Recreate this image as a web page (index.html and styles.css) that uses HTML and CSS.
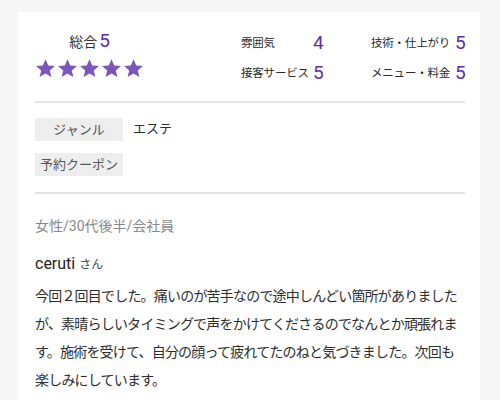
FILE: index.html
```html
<!DOCTYPE html>
<html lang="ja">
<head>
<meta charset="utf-8">
<link rel="stylesheet" href="styles.css">
</head>
<body>
<div class="card">
  <section class="ratings">
    <div class="overall">
      <div class="overall-title">総合<span class="score big">5</span></div>
      <div class="stars">
        <svg viewBox="0 0 24 24"><path d="M12 1.5l3.1 7.1 7.7.6-5.9 5 1.8 7.6L12 17.8l-6.7 4 1.8-7.6-5.9-5 7.7-.6z"/></svg>
        <svg viewBox="0 0 24 24"><path d="M12 1.5l3.1 7.1 7.7.6-5.9 5 1.8 7.6L12 17.8l-6.7 4 1.8-7.6-5.9-5 7.7-.6z"/></svg>
        <svg viewBox="0 0 24 24"><path d="M12 1.5l3.1 7.1 7.7.6-5.9 5 1.8 7.6L12 17.8l-6.7 4 1.8-7.6-5.9-5 7.7-.6z"/></svg>
        <svg viewBox="0 0 24 24"><path d="M12 1.5l3.1 7.1 7.7.6-5.9 5 1.8 7.6L12 17.8l-6.7 4 1.8-7.6-5.9-5 7.7-.6z"/></svg>
        <svg viewBox="0 0 24 24"><path d="M12 1.5l3.1 7.1 7.7.6-5.9 5 1.8 7.6L12 17.8l-6.7 4 1.8-7.6-5.9-5 7.7-.6z"/></svg>
      </div>
    </div>
    <div class="detail">
      <span class="label">雰囲気</span><span class="score">4</span>
      <span class="label">技術・仕上がり</span><span class="score">5</span>
      <span class="label">接客サービス</span><span class="score">5</span>
      <span class="label">メニュー・料金</span><span class="score">5</span>
    </div>
  </section>
  <section class="tags">
    <div class="tag-row"><span class="tag">ジャンル</span><span class="tag-value">エステ</span></div>
    <div class="tag-row"><span class="tag">予約クーポン</span></div>
  </section>
  <section class="review">
    <div class="profile">女性/30代後半/会社員</div>
    <div class="author"><span class="name">ceruti</span> <span class="san">さん</span></div>
    <p class="body">今回２回目でした。痛いのが苦手なので途中しんどい箇所がありましたが、素晴らしいタイミングで声をかけてくださるのでなんとか頑張れます。施術を受けて、自分の顔って疲れてたのねと気づきました。次回も楽しみにしています。</p>
  </section>
</div>
</body>
</html>
```
FILE: styles.css
```css
html, body {
  margin: 0;
  padding: 0;
}
body {
  background: #f7f7f7;
  font-family: Roboto, "Noto Sans CJK JP", sans-serif;
  color: #333;
  width: 500px;
  height: 400px;
  overflow: hidden;
}
.card {
  margin: 12px 0 0 18px;
  width: 462px;
  min-height: 400px;
  background: #fff;
  padding: 0 15px 0 17px;
  box-sizing: border-box;
}
.ratings {
  display: flex;
  align-items: flex-start;
  padding: 17px 0 16px;
  border-bottom: 2px solid #e4e4e4;
}
.overall {
  width: 108px;
  display: flex;
  flex-direction: column;
  align-items: center;
}
.overall-title {
  font-size: 14px;
  line-height: 24px;
  color: #333;
  padding-left: 1px;
}
.score {
  color: #5b2ea6;
  font-family: Roboto, sans-serif;
  font-size: 19px;
  line-height: 24px;
}
.big {
  margin-left: 2px;
}
.stars {
  display: flex;
  gap: 1px;
  margin-top: 4px;
}
.stars svg {
  width: 21px;
  height: 21px;
  fill: #7d56bd;
}
.detail {
  margin-left: 98px;
  margin-top: 2px;
  display: grid;
  grid-template-columns: 72px 58px 84px auto;
  row-gap: 6px;
  align-items: center;
}
.label {
  font-size: 11.5px;
  line-height: 24px;
  color: #2a2a2a;
  letter-spacing: -0.2px;
}
.tags {
  padding: 15px 0 16px;
  border-bottom: 2px solid #e4e4e4;
  display: flex;
  flex-direction: column;
  gap: 12px;
}
.tag-row {
  display: flex;
  align-items: center;
}
.tag {
  width: 88px;
  height: 23px;
  line-height: 23px;
  text-align: center;
  background: #eeeeee;
  color: #555;
  font-size: 13px;
}
.tag-value {
  margin-left: 10px;
  font-size: 13px;
  color: #2a2a2a;
  position: relative;
  top: -2px;
}
.review {
  padding-top: 22px;
}
.profile {
  font-size: 14px;
  line-height: 20px;
  color: #888;
}
.author {
  margin-top: 17px;
  line-height: 22px;
}
.name {
  font-size: 16px;
  color: #222;
}
.san {
  font-size: 12px;
  color: #444;
}
.body {
  margin: 6px 0 0;
  font-size: 14px;
  letter-spacing: -0.8px;
  line-height: 28px;
  color: #2e2e2e;
}
```
